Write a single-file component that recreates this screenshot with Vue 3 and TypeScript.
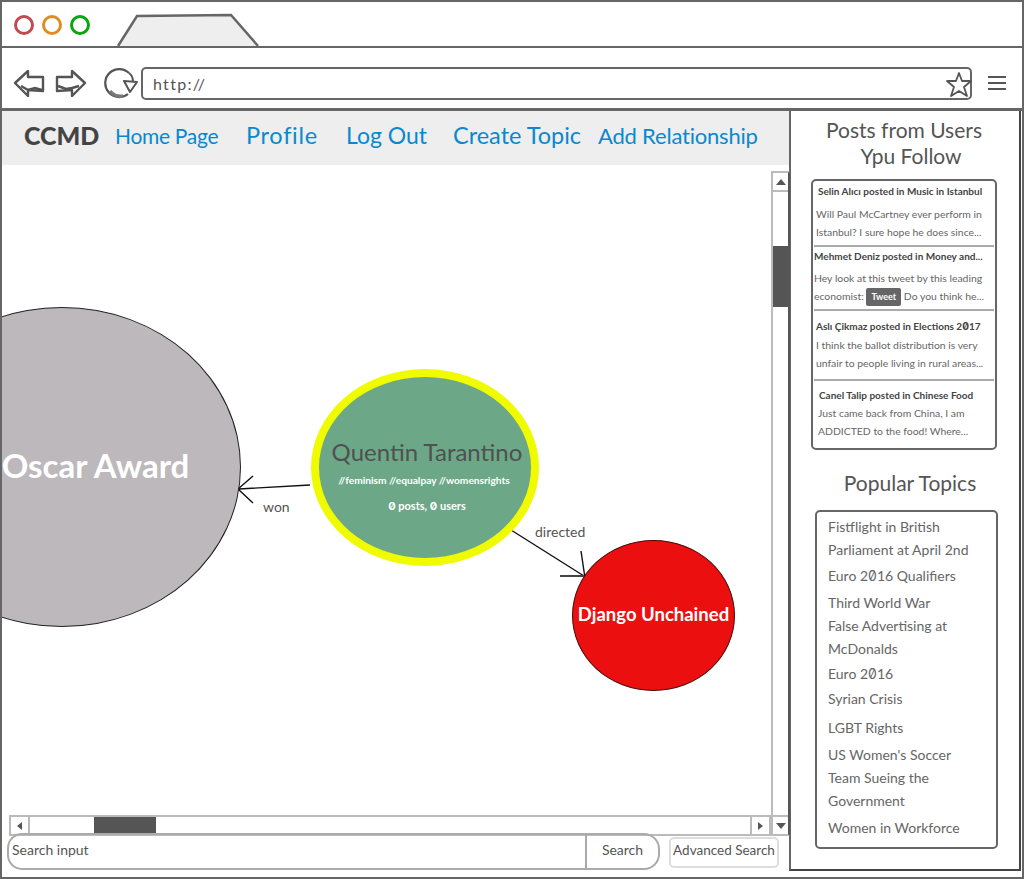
<template>
  <div class="browser">
    <header class="tabs">
      <span class="dot dot-red"></span>
      <span class="dot dot-orange"></span>
      <span class="dot dot-green"></span>
      <svg class="tab" width="146" height="34" viewBox="0 0 146 34">
        <path d="M2 33 L21 3 L115 2 L142 33" fill="#eee" stroke="#666" stroke-width="2.5" />
      </svg>
    </header>

    <div class="toolbar">
      <svg class="arrow" width="32" height="28" viewBox="0 0 32 28">
        <path d="M2 14 L15 2 V8 H30 V22 L15 21 V27 Z" fill="#fff" stroke="#555" stroke-width="2.4" stroke-linejoin="round" />
        <path d="M8 17 L15 21 L22 19 L29 21" fill="none" stroke="#555" stroke-width="2.5" />
      </svg>
      <svg class="arrow arrow-next" width="32" height="28" viewBox="0 0 32 28">
        <path d="M30 14 L17 2 V8 H2 V22 L17 21 V27 Z" fill="#fff" stroke="#555" stroke-width="2.4" stroke-linejoin="round" />
        <path d="M3 17 L11 20 L17 19 L24 17" fill="none" stroke="#555" stroke-width="2.5" />
      </svg>
      <svg class="reload" width="35" height="32" viewBox="0 0 35 32">
        <path d="M25 6 A14 14 0 1 0 24 27" fill="none" stroke="#555" stroke-width="2.2" />
        <path d="M6 24 A14 14 0 0 0 19 29" fill="none" stroke="#777" stroke-width="3.5" />
        <path d="M25 6 C28 8 29 11 29 15" fill="none" stroke="#555" stroke-width="2" />
        <path d="M20 14 L33 15 L26 25 Z" fill="#fff" stroke="#555" stroke-width="2" stroke-linejoin="round" />
      </svg>
      <div class="url">
        <span class="url-text">http://</span>
        <svg width="26" height="26" viewBox="0 0 26 26">
          <path d="M13 2 L16 10 L25 10 L18 16 L21 25 L13 20 L5 25 L8 16 L1 10 L10 10 Z" fill="#fff" stroke="#555" stroke-width="1.8" stroke-linejoin="round" />
        </svg>
      </div>
      <div class="menu"><i></i><i></i><i></i></div>
    </div>

    <div class="main">
      <div class="content">
        <nav class="nav">
          <span class="brand">CCMD</span>
          <a
            v-for="link in links"
            :key="link.label"
            class="nav-link"
            :style="{ fontSize: link.size + 'px', letterSpacing: link.spacing + 'px' }"
          >{{ link.label }}</a>
        </nav>

        <section class="canvas">
          <div class="graph">
            <svg class="edges" width="787" height="668" viewBox="2 165 787 668">
              <path d="M310 485 L239 489 M253 476 L238 489 L253 503" fill="none" stroke="#111" stroke-width="1.4" />
              <path d="M511 530 L584 576 M581 551 L585 578" fill="none" stroke="#111" stroke-width="1.4" />
              <path d="M560 576 L584 576" fill="none" stroke="#444" stroke-width="2" />
            </svg>
            <div class="node node-oscar">Oscar Award</div>
            <div class="node node-quentin">
              <div class="quentin-name">Quentin Tarantino</div>
              <div class="quentin-tags">//feminism //equalpay //womensrights</div>
              <div class="quentin-count"><span class="zero">0</span> posts, <span class="zero">0</span> users</div>
            </div>
            <div class="node node-django">Django Unchained</div>
            <span class="edge-label label-won">won</span>
            <span class="edge-label label-directed">directed</span>
          </div>

          <div class="scroll-v">
            <span class="scroll-btn"><i class="tri tri-up"></i></span>
            <span class="thumb-v"></span>
            <span class="scroll-btn scroll-btn-end"><i class="tri tri-down"></i></span>
          </div>
          <div class="scroll-h">
            <span class="scroll-btn-h"><i class="tri tri-left"></i></span>
            <span class="thumb-h"></span>
            <span class="scroll-btn-h scroll-btn-h-end"><i class="tri tri-right"></i></span>
          </div>
        </section>

        <div class="search-row">
          <div class="search-input">Search input</div>
          <div class="search-btn">Search</div>
          <div class="advanced">Advanced Search</div>
        </div>
      </div>

      <aside class="sidebar">
        <h2 class="side-title side-title-posts">Posts from Users<br /><span class="title-second">Ypu Follow</span></h2>
        <div class="posts">
          <article
            v-for="post in posts"
            :key="post.title"
            class="post"
            :style="{ height: post.height + 'px', paddingTop: post.top + 'px' }"
          >
            <div class="post-title" :style="{ paddingLeft: post.indent + 'px' }">
              {{ post.title }}<span v-if="post.year"> 2<span class="zero">0</span>17</span>
            </div>
            <p class="post-body" :style="{ marginTop: post.gap + 'px', paddingLeft: post.bodyIndent + 'px' }">
              {{ post.line1 }}<br />{{ post.line2 }}
              <span v-if="post.tweet" class="tweet">Tweet</span>
              {{ post.line3 }}
            </p>
          </article>
        </div>

        <h2 class="side-title side-title-topics">Popular Topics</h2>
        <ul class="topics">
          <li v-for="topic in topics" :key="topic.text + topic.rest" class="topic" :style="{ marginTop: topic.gap + 'px' }">
            {{ topic.text }}<span v-if="topic.year"> 2<span class="zero">0</span>16</span>{{ topic.rest }}
          </li>
        </ul>
      </aside>
    </div>
  </div>
</template>

<script setup lang="ts">
interface Post {
  title: string
  year?: boolean
  height: number
  top: number
  gap: number
  indent: number
  bodyIndent: number
  line1: string
  line2: string
  tweet?: boolean
  line3?: string
}

interface Topic {
  text: string
  year?: boolean
  rest?: string
  gap: number
}

const links = [
  { label: 'Home Page', size: 21, spacing: -0.3 },
  { label: 'Profile', size: 23.5, spacing: 0.7 },
  { label: 'Log Out', size: 23, spacing: 0 },
  { label: 'Create Topic', size: 23.5, spacing: 0 },
  { label: 'Add Relationship', size: 22, spacing: -0.2 },
]

const posts: Post[] = [
  {
    title: 'Selin Alıcı posted in Music in Istanbul',
    height: 66,
    top: 1,
    gap: 5,
    indent: 4,
    bodyIndent: 2,
    line1: 'Will Paul McCartney ever perform in',
    line2: 'Istanbul? I sure hope he does since...',
  },
  {
    title: 'Mehmet Deniz posted in Money and...',
    height: 64,
    top: 0,
    gap: 4,
    indent: 0,
    bodyIndent: 0,
    line1: 'Hey look at this tweet by this leading',
    line2: 'economist:',
    tweet: true,
    line3: 'Do you think he...',
  },
  {
    title: 'Aslı Çikmaz posted in Elections',
    year: true,
    height: 70,
    top: 6,
    gap: 1,
    indent: 2,
    bodyIndent: 2,
    line1: 'I think the ballot distribution is very',
    line2: 'unfair to people living in rural areas...',
  },
  {
    title: 'Canel Talip posted in Chinese Food',
    height: 66,
    top: 5,
    gap: 0,
    indent: 5,
    bodyIndent: 4,
    line1: 'Just came back from China, I am',
    line2: 'ADDICTED to the food! Where...',
  },
]

const topics: Topic[] = [
  { text: 'Fistflight in British', gap: 0 },
  { text: 'Parliament at April 2nd', gap: 0 },
  { text: 'Euro', year: true, rest: ' Qualifiers', gap: 3 },
  { text: 'Third World War', gap: 4 },
  { text: 'False Advertising at', gap: 0 },
  { text: 'McDonalds', gap: 0 },
  { text: 'Euro', year: true, gap: 2 },
  { text: 'Syrian Crisis', gap: 2 },
  { text: 'LGBT Rights', gap: 6 },
  { text: "US Women's Soccer", gap: 4 },
  { text: 'Team Sueing the', gap: 0 },
  { text: 'Government', gap: 0 },
  { text: 'Women in Workforce', gap: 4 },
]
</script>

<style>
html,
body {
  margin: 0;
  background: #fff;
}
</style>

<style scoped>
.browser {
  box-sizing: border-box;
  width: 1024px;
  height: 879px;
  border: 2px solid #666;
  background: #fff;
  color: #555;
  font-family: Lato, "Noto Sans", sans-serif;
  overflow: hidden;
}

.tabs {
  box-sizing: border-box;
  height: 46px;
  padding: 13px 0 0 12px;
  display: flex;
  align-items: flex-start;
  gap: 8px;
  border-bottom: 2px solid #666;
}

.dot {
  box-sizing: border-box;
  width: 20px;
  height: 20px;
  border: 3px solid;
  border-radius: 50%;
}
.dot-red { border-color: #c04a4f; }
.dot-orange { border-color: #de8d25; }
.dot-green { border-color: #08a60e; }

.tab {
  margin: -2px 0 0 18px;
}

.toolbar {
  box-sizing: border-box;
  height: 63px;
  padding: 10px 14px 0 11px;
  display: flex;
  align-items: center;
  border-bottom: 3px solid #666;
}

.arrow-next { margin-left: 10px; }
.reload { margin-left: 17px; }

.url {
  box-sizing: border-box;
  width: 831px;
  height: 33px;
  margin-left: 2px;
  padding: 0 0 0 10px;
  border: 2px solid #666;
  border-radius: 5px;
  display: flex;
  align-items: center;
  justify-content: space-between;
}

.url-text {
  font-size: 16px;
  letter-spacing: 1.3px;
  color: #555;
}

.url svg {
  margin: 2px -2px 0 0;
}

.menu {
  width: 18px;
  margin-left: 16px;
  display: flex;
  flex-direction: column;
  gap: 4px;
}
.menu i {
  height: 2px;
  background: #555;
}

.main {
  height: 766px;
  display: flex;
}

.content {
  position: relative;
  z-index: 2;
  width: 787px;
  display: flex;
  flex-direction: column;
}

.nav {
  box-sizing: border-box;
  height: 54px;
  flex: none;
  padding: 0 0 6px 22px;
  display: grid;
  grid-template-columns: 91px 131px 100px 107px 145px auto;
  align-items: center;
  background: #eee;
  white-space: nowrap;
}

.brand {
  font-size: 25px;
  font-weight: 900;
  color: #444;
}

.nav-link {
  color: #0a88cf;
}

.canvas {
  position: relative;
  height: 668px;
  flex: none;
}

.graph {
  position: absolute;
  inset: 0;
  overflow: hidden;
}

.edges {
  position: absolute;
  left: 0;
  top: 0;
}

.node {
  position: absolute;
  box-sizing: border-box;
  border-radius: 50%;
  display: flex;
  align-items: center;
  justify-content: center;
  color: #fff;
}

.node-oscar {
  left: -119px;
  top: 142px;
  width: 358px;
  height: 320px;
  padding: 0 0 4px 67px;
  background: #bcb8bb;
  border: 1px solid #222;
  font-size: 33px;
  font-weight: 700;
  white-space: nowrap;
}

.node-quentin {
  left: 309px;
  top: 204px;
  width: 228px;
  height: 197px;
  padding: 12px 0 0 4px;
  flex-direction: column;
  background: #6ca888;
  border: 8px solid #f0fb00;
}

.quentin-name {
  font-size: 24px;
  color: #505050;
  margin-top: 2px;
  white-space: nowrap;
}

.quentin-tags {
  margin: 8px 0 0 -6px;
  font-size: 10.2px;
  font-weight: 700;
  white-space: nowrap;
}

.quentin-count {
  margin-top: 13px;
  font-size: 11px;
  font-weight: 700;
  white-space: nowrap;
}

.node-django {
  left: 570px;
  top: 375px;
  width: 163px;
  height: 151px;
  padding-bottom: 4px;
  background: #ec0f0f;
  border: 1px solid #4a0a0a;
  font-size: 18.5px;
  font-weight: 700;
  white-space: nowrap;
}

.edge-label {
  position: absolute;
  font-size: 14px;
  color: #555;
}
.label-won { left: 261px; top: 333px; }
.label-directed { left: 533px; top: 358px; }

.zero {
  font-family: Inter, sans-serif;
  font-variant-numeric: slashed-zero;
}

.scroll-v {
  position: absolute;
  left: 769px;
  top: 6px;
  box-sizing: border-box;
  width: 19px;
  height: 665px;
  border: 2px solid #bbb;
  border-right-color: #555;
  background: #fff;
}

.scroll-btn {
  box-sizing: border-box;
  position: absolute;
  left: 0;
  top: 0;
  width: 100%;
  height: 19px;
  border-bottom: 2px solid #bbb;
  display: flex;
  align-items: center;
  justify-content: center;
}

.scroll-btn-end {
  top: auto;
  bottom: 0;
  border-bottom: 0;
  border-top: 2px solid #bbb;
}

.thumb-v {
  position: absolute;
  left: 0;
  right: 0;
  top: 73px;
  height: 61px;
  background: #555;
}

.scroll-h {
  position: absolute;
  left: 7px;
  top: 650px;
  box-sizing: border-box;
  width: 762px;
  height: 21px;
  border: 2px solid #bbb;
  background: #fff;
}

.scroll-btn-h {
  box-sizing: border-box;
  position: absolute;
  left: 0;
  top: 0;
  width: 19px;
  height: 100%;
  border-right: 2px solid #bbb;
  display: flex;
  align-items: center;
  justify-content: center;
}

.scroll-btn-h-end {
  left: auto;
  right: 0;
  border-right: 0;
  border-left: 2px solid #bbb;
}

.thumb-h {
  position: absolute;
  left: 83px;
  top: 0;
  width: 62px;
  height: 16px;
  background: #555;
}

.tri {
  width: 0;
  height: 0;
  border: 5px solid transparent;
}
.tri-up { border-top: 0; border-bottom: 6px solid #555; }
.tri-down { border-bottom: 0; border-top: 6px solid #555; }
.tri-left { border-left: 0; border-right-color: #555; border-width: 4px 5px 4px 0; }
.tri-right { border-right: 0; border-left-color: #555; border-width: 4px 0 4px 5px; }

.search-row {
  position: relative;
  z-index: 3;
  height: 37px;
  padding-left: 5px;
  display: flex;
  font-size: 14px;
  color: #555;
}

.search-input {
  box-sizing: border-box;
  width: 578px;
  height: 37px;
  padding-left: 3px;
  border: 2px solid #aaa;
  border-right: 0;
  border-radius: 15px 0 0 15px;
  line-height: 30px;
}

.search-btn {
  box-sizing: border-box;
  width: 75px;
  height: 37px;
  border: 2px solid #aaa;
  border-radius: 0 16px 16px 0;
  line-height: 30px;
  text-align: center;
}

.advanced {
  box-sizing: border-box;
  width: 110px;
  height: 31px;
  margin: 4px 0 0 9px;
  border: 2px solid #ddd;
  border-radius: 5px;
  font-size: 13.5px;
  line-height: 23px;
  text-align: center;
  white-space: nowrap;
}

.sidebar {
  box-sizing: border-box;
  width: 232px;
  height: 760px;
  border: 2px solid #444;
  border-top: 0;
  border-left-color: #666;
  display: flex;
  flex-direction: column;
}

.side-title {
  margin: 0;
  font-size: 21px;
  font-weight: 400;
  line-height: 26px;
  text-align: center;
}

.side-title-posts {
  padding-top: 6px;
  width: 226px;
}

.title-second {
  padding-left: 14px;
}

.side-title-topics {
  margin-top: 20px;
  padding-left: 10px;
}

.posts {
  box-sizing: border-box;
  width: 186px;
  height: 271px;
  margin: 10px 0 0 20px;
  border: 2px solid #666;
  border-radius: 5px;
}

.post {
  box-sizing: border-box;
  margin: 0 1px;
  border-bottom: 2px solid #aaa;
}
.post:last-child {
  border-bottom: 0;
}

.post-title {
  font-size: 10px;
  font-weight: 700;
  color: #444;
  line-height: 18px;
  white-space: nowrap;
}

.post-body {
  margin: 0;
  font-size: 10.4px;
  line-height: 18px;
  color: #666;
  white-space: nowrap;
}

.tweet {
  display: inline-block;
  padding: 0 5px;
  background: #666;
  border-radius: 2px;
  color: #fff;
  font-size: 9px;
  font-weight: 700;
  line-height: 18px;
}

.topics {
  box-sizing: border-box;
  width: 183px;
  height: 339px;
  margin: 14px 0 0 24px;
  padding: 3px 0 0 11px;
  border: 2px solid #666;
  border-radius: 5px;
  list-style: none;
}

.topic {
  font-size: 14px;
  line-height: 23px;
  color: #666;
  white-space: nowrap;
}
</style>
